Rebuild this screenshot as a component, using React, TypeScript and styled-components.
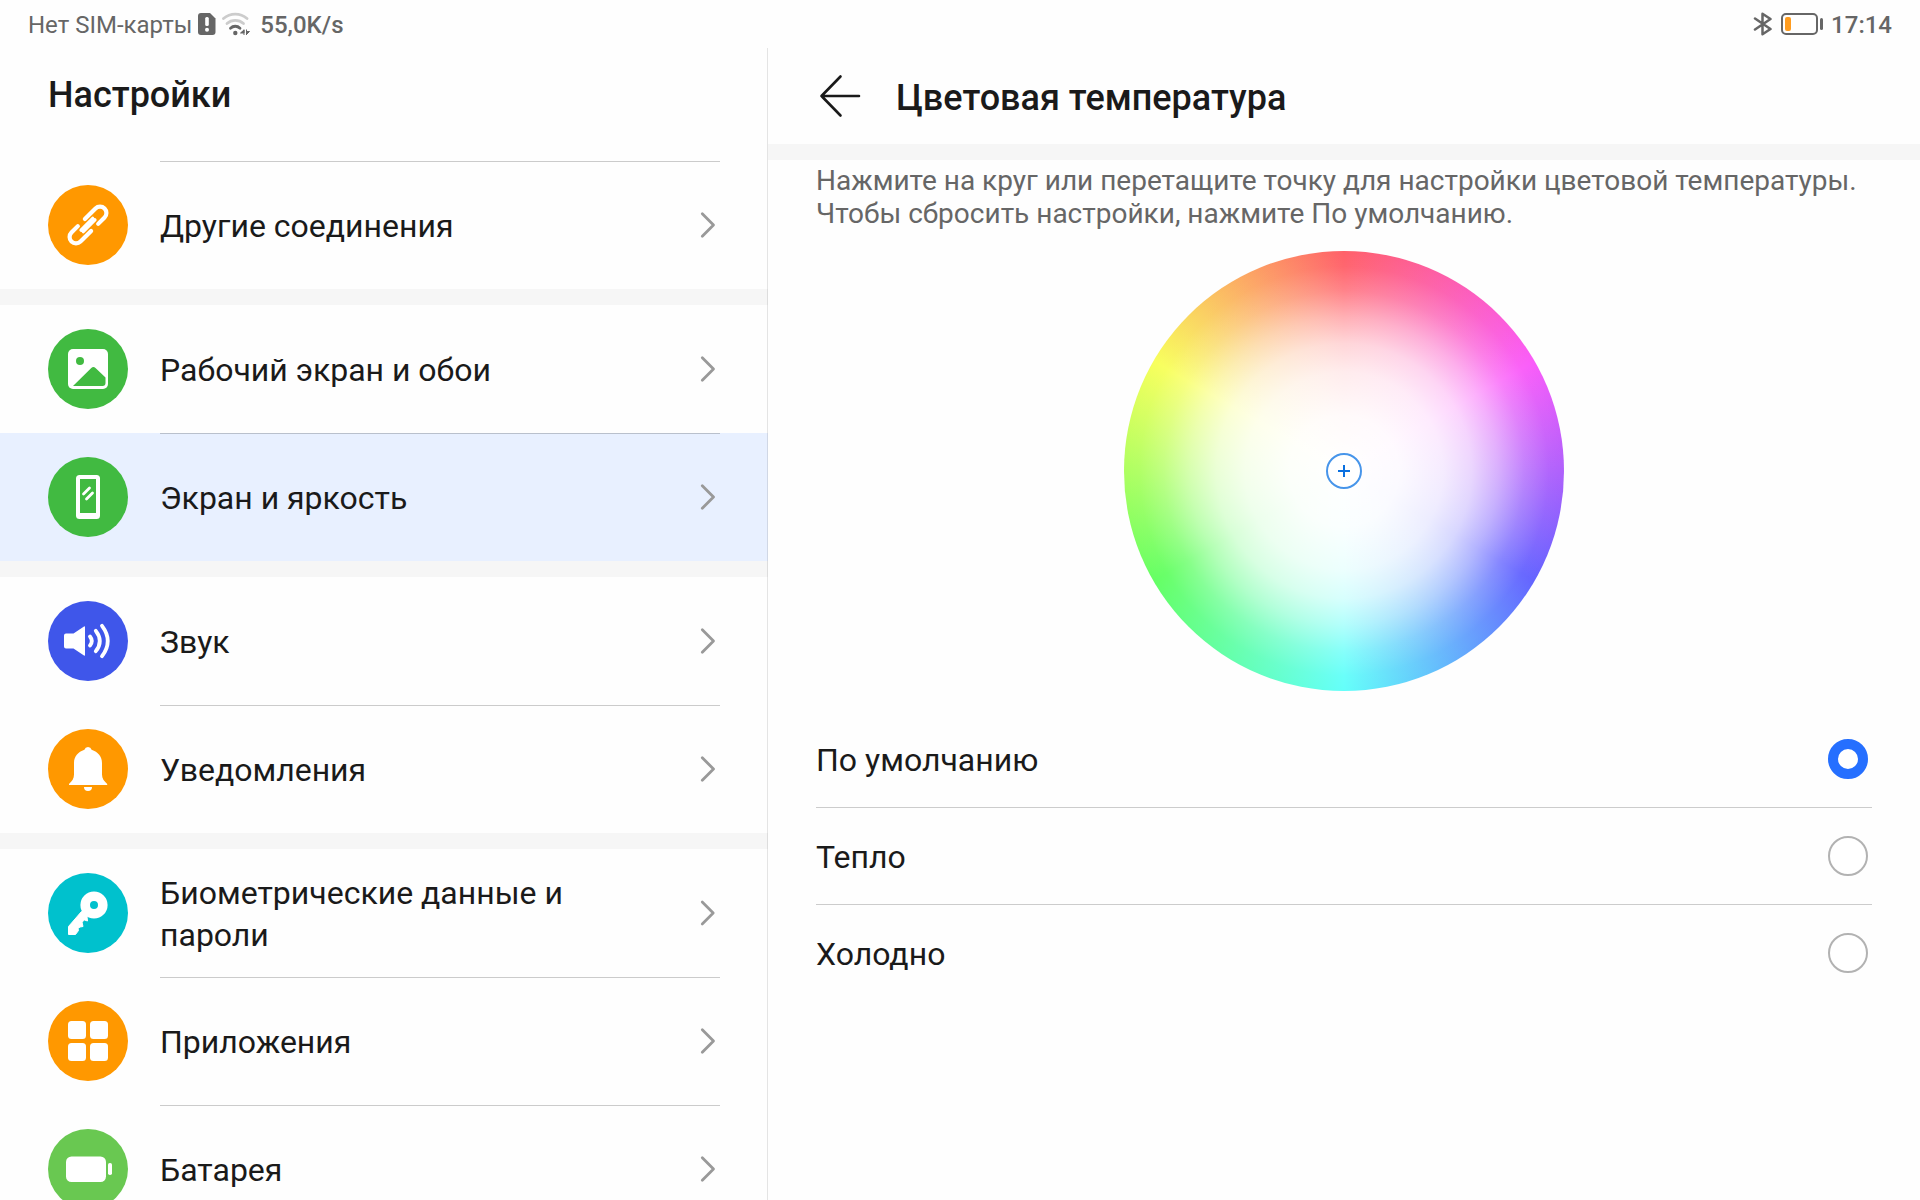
import React, { useState } from 'react';
import styled, { createGlobalStyle } from 'styled-components';

const GlobalStyle = createGlobalStyle`
  *, *::before, *::after { box-sizing: border-box; }
  body {
    margin: 0;
    background: #fefefe;
    color: #1a1a1a;
    font-family: Roboto, "Noto Sans", sans-serif;
    overflow: hidden;
  }
`;

const Screen = styled.div`
  display: flex;
  flex-direction: column;
  height: 100vh;
`;

const StatusBar = styled.header`
  display: flex;
  flex: none;
  align-items: center;
  justify-content: space-between;
  height: 48px;
  padding: 0 28px;
  color: #666;
  font-size: 24px;
  line-height: 28px;
`;

const StatusGroup = styled.div`
  display: flex;
  align-items: center;
  gap: 6px;
`;

const StatusText = styled.span<{ $strong?: boolean }>`
  padding-top: 2px;
  font-weight: ${(p) => (p.$strong ? 500 : 400)};
`;

const Speed = styled(StatusText)`
  margin-left: 4px;
`;

const Panes = styled.div`
  display: flex;
  flex: 1;
  min-height: 0;
`;

const Sidebar = styled.aside`
  position: relative;
  display: flex;
  flex-direction: column;
  flex: none;
  width: 40%;

  &::after {
    content: "";
    position: absolute;
    inset: 0 0 0 auto;
    width: 1px;
    background: rgba(0, 0, 0, 0.1);
  }
`;

const SidebarHeader = styled.div`
  display: flex;
  flex: none;
  align-items: center;
  height: 112px;
  padding: 0 48px 18px;
`;

const Title = styled.h1`
  margin: 0;
  font-size: 36px;
  font-weight: 500;
  line-height: 44px;
`;

const Nav = styled.nav`
  flex: 1;
  min-height: 0;
  padding-top: 1px;
  overflow-y: auto;
  scrollbar-width: none;
`;

const Group = styled.ul`
  margin: 0;
  padding: 0;
  list-style: none;

  & + & {
    border-top: 16px solid #f6f6f6;
  }
`;

const Row = styled.a<{ $selected?: boolean }>`
  display: flex;
  align-items: center;
  gap: 32px;
  height: 128px;
  padding: 0 48px;
  background: ${(p) => (p.$selected ? '#e8f0ff' : 'transparent')};
  color: inherit;
  text-decoration: none;
`;

const RowIcon = styled.svg`
  flex: none;
  width: 80px;
  height: 80px;
`;

const RowBody = styled.span<{ $divided?: boolean }>`
  display: flex;
  flex: 1;
  align-items: center;
  justify-content: space-between;
  gap: 32px;
  height: 100%;
  padding-right: 4px;
  box-shadow: ${(p) => (p.$divided ? 'inset 0 1px 0 rgba(0, 0, 0, 0.2)' : 'none')};
`;

const RowLabel = styled.span`
  padding-top: 2px;
  font-size: 32px;
  line-height: 42px;
`;

const Detail = styled.main`
  display: flex;
  flex: 1;
  flex-direction: column;
  min-width: 0;
`;

const DetailHeader = styled.div`
  display: flex;
  flex: none;
  align-items: center;
  gap: 32px;
  height: 112px;
  padding: 4px 48px 0;
  border-bottom: 16px solid #f6f6f6;
`;

const BackButton = styled.button`
  display: flex;
  padding: 0 0 4px;
  border: 0;
  background: none;
  color: inherit;
`;

const Content = styled.section`
  display: flex;
  flex-direction: column;
  padding: 4px 48px;
`;

const Hint = styled.p`
  margin: 0 0 21px;
  color: #666;
  font-size: 28px;
  line-height: 33px;
`;

const Wheel = styled.div`
  display: grid;
  place-items: center;
  align-self: center;
  width: 440px;
  height: 440px;
  margin-bottom: 20px;
  border-radius: 50%;
  background:
    radial-gradient(
      closest-side,
      #fff 0%,
      rgba(255, 255, 255, 0.97) 25%,
      rgba(255, 255, 255, 0.88) 45%,
      rgba(255, 255, 255, 0.74) 58%,
      rgba(255, 255, 255, 0.5) 70%,
      rgba(255, 255, 255, 0.22) 82%,
      rgba(255, 255, 255, 0.04) 93%,
      rgba(255, 255, 255, 0) 100%
    ),
    conic-gradient(#ff6069, #fa5cf9 60deg, #6464ff 120deg, #64fffa 180deg, #64ff64 240deg, #f8ff5c 300deg, #ff6069);
`;

const Options = styled.div`
  display: flex;
  flex-direction: column;
`;

const Option = styled.label`
  display: flex;
  align-items: center;
  justify-content: space-between;
  height: 96px;
  padding-right: 4px;

  & + & {
    height: 97px;
    border-top: 1px solid #ccc;
  }
`;

const Radio = styled.input`
  appearance: none;
  width: 40px;
  height: 40px;
  margin: 0;
  border: 2px solid #b2b2b2;
  border-radius: 50%;
  background: #fff;

  &:checked {
    border: 10px solid #256fff;
  }
`;

const SimIcon = () => (
  <svg width="18" height="24" viewBox="0 0 18 24" aria-hidden="true">
    <path d="M3 1h9l5.500 5.500V20a3 3 0 0 1-3 3H3a3 3 0 0 1-3-3V4a3 3 0 0 1 3-3Z" fill="#666" />
    <rect x="7.200" y="5" width="3.600" height="9" rx="1.500" fill="#fff" />
    <circle cx="9" cy="17.800" r="2" fill="#fff" />
  </svg>
);

const WifiIcon = () => (
  <svg width="28" height="24" viewBox="0 0 28 24" fill="none" aria-hidden="true">
    <path d="M1.500 6.500a18 18 0 0 1 23.500 0" stroke="#ccc" strokeWidth="2.800" strokeLinecap="round" />
    <path d="M5 11.500a12.500 12.500 0 0 1 16.500 0" stroke="#ccc" strokeWidth="2.800" strokeLinecap="round" />
    <path d="M8.500 16.200a6.800 6.800 0 0 1 9.500 0" stroke="#666" strokeWidth="2.800" strokeLinecap="round" />
    <circle cx="13.300" cy="21" r="2.200" fill="#666" />
    <path d="M22 17.500v5.500M22 18l-3.500 3h3.500zM24.500 23v-5.500M24.500 22.500l3-3h-3z" stroke="#666" fill="#666" />
  </svg>
);

const BluetoothIcon = () => (
  <svg width="22" height="24" viewBox="0 0 22 24" fill="none" stroke="#666" strokeWidth="2.500" strokeLinejoin="round" strokeLinecap="round" aria-hidden="true">
    <path d="M2 6.500 17.500 17 9.500 22.300V1.700L17.500 7 2 17.500" />
  </svg>
);

const StatusBatteryIcon = () => (
  <svg width="44" height="24" viewBox="0 0 44 24" aria-hidden="true">
    <rect x="1" y="2" width="35" height="20" rx="4" fill="none" stroke="#666" strokeWidth="2" />
    <rect x="4" y="5" width="6" height="14" rx="2" fill="#ff9c1f" />
    <rect x="39" y="6" width="3" height="12" rx="1.500" fill="#666" />
  </svg>
);

const Chevron = () => (
  <svg width="16" height="28" viewBox="0 0 16 28" fill="none" stroke="#999" strokeWidth="2.800" strokeLinecap="round" strokeLinejoin="round" aria-hidden="true">
    <path d="M2.300 2.800 13.500 14 2.300 25.200" />
  </svg>
);

const BackIcon = () => (
  <svg width="48" height="48" viewBox="0 0 48 48" fill="none" stroke="#1a1a1a" strokeWidth="2.600" strokeLinecap="round" strokeLinejoin="round" aria-hidden="true">
    <path d="M43 24H5.500M24.500 4.500 5.500 24l19 19.500" />
  </svg>
);

const MarkerIcon = () => (
  <svg width="36" height="36" viewBox="0 0 36 36" fill="none" aria-hidden="true">
    <circle cx="18" cy="18" r="17" fill="#fff" stroke="#4795ea" strokeWidth="2" />
    <path d="M18 12v12M12 18h12" stroke="#0a70e0" strokeWidth="2" />
  </svg>
);

const glyphs = {
  link: (
    <g transform="rotate(-45 40 40)" fill="none" stroke="#fff" strokeWidth="4.200" strokeLinecap="round">
      <path d="M42 33.600h15a6.400 6.400 0 0 1 0 12.800H48" />
      <path d="M38 46.400H23a6.400 6.400 0 0 1 0-12.800h9" />
      <path d="M32 41.300h16.500M31.500 38.700H48" strokeWidth="3.400" />
    </g>
  ),
  picture: (
    <>
      <rect x="20" y="20" width="40" height="40" rx="5" fill="#fff" />
      <circle cx="32" cy="32" r="4" fill="#41ba41" />
      <path d="M25 57 43.300 39a3 3 0 0 1 4.200 0L57.500 48.500V54a3 3 0 0 1-3 3Z" fill="#41ba41" />
    </>
  ),
  display: (
    <>
      <rect x="28" y="18" width="24" height="44" rx="3.500" fill="#fff" />
      <rect x="32" y="22" width="16" height="34" fill="#41ba41" />
      <path d="m35.500 37 6-6M38.500 42l6-6" stroke="#fff" strokeWidth="2.800" strokeLinecap="round" />
    </>
  ),
  sound: (
    <>
      <path d="M18 32.500h7.500L36 25.500q1-.6 1 .8v27.400q0 1.400-1 .8l-10.500-7H18a2 2 0 0 1-2-2v-11a2 2 0 0 1 2-2Z" fill="#fff" />
      <g fill="none" stroke="#fff" strokeWidth="3.800" strokeLinecap="round">
        <path d="M42 35.500q3.600 4.500 0 9" />
        <path d="M47.800 29.800q8 10.200 0 20.400" />
        <path d="M54 24.800q11.500 15.200 0 30.400" />
      </g>
    </>
  ),
  bell: (
    <g fill="#fff">
      <path d="M40 18a4 4 0 0 1 3.600 2.800C50 23 54 27.500 54 34v11.500c0 4 2 6.500 5.200 9.500V56H21v-1c3.200-3 5-5.500 5-9.500V34c0-6.500 4-11 10.400-13.200A4 4 0 0 1 40 18Z" />
      <path d="M36 58h8a4 4 0 0 1-8 0Z" />
    </g>
  ),
  key: (
    <>
      <path d="M33.500 38.500 20.500 53.500V61.500h7l3-4-.5-2 2-1.500 3-.5-1-4.500 2.500-2 3 1-.5-4.500 4.500-4Z" fill="#fff" stroke="#fff" strokeWidth="1" strokeLinejoin="round" />
      <circle cx="46" cy="32" r="8.800" fill="#00c1cd" stroke="#fff" strokeWidth="9.600" />
    </>
  ),
  apps: (
    <g fill="#fff">
      <rect x="20" y="20" width="18" height="18" rx="3.500" />
      <rect x="42" y="20" width="18" height="18" rx="3.500" />
      <rect x="20" y="42" width="18" height="18" rx="3.500" />
      <rect x="42" y="42" width="18" height="18" rx="3.500" />
    </g>
  ),
  battery: (
    <g fill="#fff">
      <rect x="18" y="27.500" width="40" height="25.500" rx="5.500" />
      <rect x="60" y="34" width="4" height="12" rx="1.800" />
    </g>
  ),
};

type Item = { label: string; color: string; glyph: keyof typeof glyphs; divided?: boolean; selected?: boolean };

const groups: Item[][] = [
  [{ label: 'Другие соединения', color: '#ff9800', glyph: 'link', divided: true }],
  [
    { label: 'Рабочий экран и обои', color: '#41ba41', glyph: 'picture' },
    { label: 'Экран и яркость', color: '#41ba41', glyph: 'display', divided: true, selected: true },
  ],
  [
    { label: 'Звук', color: '#3f56ea', glyph: 'sound' },
    { label: 'Уведомления', color: '#ff9800', glyph: 'bell', divided: true },
  ],
  [
    { label: 'Биометрические данные и пароли', color: '#00c1cd', glyph: 'key' },
    { label: 'Приложения', color: '#ff9800', glyph: 'apps', divided: true },
    { label: 'Батарея', color: '#69c851', glyph: 'battery', divided: true },
  ],
];

const temperatures = ['По умолчанию', 'Тепло', 'Холодно'];

export default function App() {
  const [temperature, setTemperature] = useState(temperatures[0]);

  return (
    <Screen>
      <GlobalStyle />
      <StatusBar>
        <StatusGroup>
          <StatusText>Нет SIM-карты</StatusText>
          <SimIcon />
          <WifiIcon />
          <Speed $strong>55,0K/s</Speed>
        </StatusGroup>
        <StatusGroup>
          <BluetoothIcon />
          <StatusBatteryIcon />
          <StatusText $strong>17:14</StatusText>
        </StatusGroup>
      </StatusBar>
      <Panes>
        <Sidebar>
          <SidebarHeader>
            <Title>Настройки</Title>
          </SidebarHeader>
          <Nav>
            {groups.map((items) => (
              <Group key={items[0].label}>
                {items.map((item) => (
                  <li key={item.label}>
                    <Row href={`#${item.glyph}`} $selected={item.selected} aria-current={item.selected ? 'page' : undefined}>
                      <RowIcon viewBox="0 0 80 80" aria-hidden="true">
                        <circle cx="40" cy="40" r="40" fill={item.color} />
                        {glyphs[item.glyph]}
                      </RowIcon>
                      <RowBody $divided={item.divided}>
                        <RowLabel>{item.label}</RowLabel>
                        <Chevron />
                      </RowBody>
                    </Row>
                  </li>
                ))}
              </Group>
            ))}
          </Nav>
        </Sidebar>
        <Detail>
          <DetailHeader>
            <BackButton type="button" aria-label="Назад">
              <BackIcon />
            </BackButton>
            <Title as="h2">Цветовая температура</Title>
          </DetailHeader>
          <Content>
            <Hint>
              Нажмите на круг или перетащите точку для настройки цветовой температуры. Чтобы сбросить настройки,
              нажмите По умолчанию.
            </Hint>
            <Wheel>
              <MarkerIcon />
            </Wheel>
            <Options role="radiogroup" aria-label="Цветовая температура">
              {temperatures.map((name) => (
                <Option key={name}>
                  <RowLabel>{name}</RowLabel>
                  <Radio
                    type="radio"
                    name="temperature"
                    checked={temperature === name}
                    onChange={() => setTemperature(name)}
                  />
                </Option>
              ))}
            </Options>
          </Content>
        </Detail>
      </Panes>
    </Screen>
  );
}
